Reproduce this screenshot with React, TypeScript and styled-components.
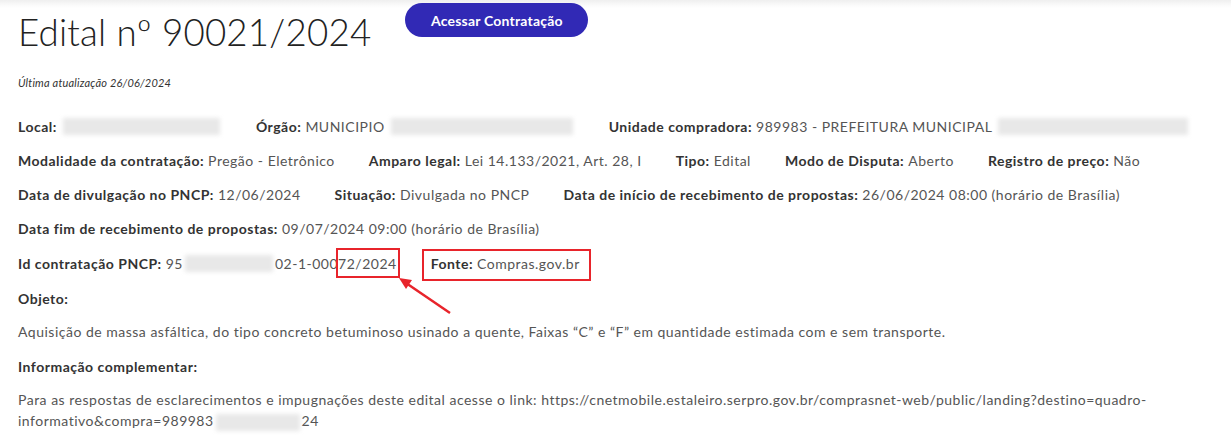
import styled, { createGlobalStyle } from 'styled-components';

const Global = createGlobalStyle`
  html, body {
    margin: 0;
    padding: 0;
    background: #ffffff;
  }
  body {
    font-family: Lato, "Open Sans", sans-serif;
    color: #333;
  }
`;

const Page = styled.div`
  width: 1231px;
  height: 442px;
  overflow: hidden;
  position: relative;
  background: linear-gradient(#efefef 0, #fafafa 5px, #fff 8px);
`;

const Header = styled.div`
  display: flex;
  align-items: flex-start;
  gap: 34px;
  padding: 3px 0 0 18px;
`;

const Title = styled.h1`
  margin: 9px 0 0;
  font-weight: 300;
  font-size: 36.7px;
  letter-spacing: 0.2px;
  color: #222;
  line-height: 40px;
`;

const ActionButton = styled.button`
  width: 183px;
  height: 34px;
  border: none;
  border-radius: 17px;
  background: #3129b5;
  color: #fff;
  font-family: Lato, sans-serif;
  font-weight: 700;
  font-size: 14px;
  letter-spacing: 0.2px;
  cursor: pointer;
`;

const Updated = styled.div`
  margin: 24px 0 0 18px;
  font-size: 11px;
  font-style: italic;
  letter-spacing: 0.2px;
  color: #333;
`;

const Details = styled.div`
  display: flex;
  flex-direction: column;
  padding: 21px 0 0 18px;
  letter-spacing: 0.5px;
`;

const Row = styled.div<{ $h?: number }>`
  display: flex;
  align-items: center;
  gap: 34px;
  height: ${(p) => p.$h ?? 34}px;
  font-size: 14px;
`;

const Item = styled.span`
  white-space: nowrap;
  color: #555;
  display: inline-flex;
  align-items: center;
  position: relative;
`;

const Label = styled.b`
  color: #333;
  font-weight: 700;
  margin-right: 4px;
`;

const Blur = styled.span<{ $w: number }>`
  display: inline-block;
  vertical-align: middle;
  width: ${(p) => p.$w}px;
  height: 17px;
  margin: 0 2px;
  background: #e8e8e8;
  filter: blur(2px);
`;

const Mark = styled.span`
  position: relative;
  &::after {
    content: '';
    position: absolute;
    left: -2px;
    right: -3px;
    top: -7px;
    bottom: -6px;
    border: 2px solid #e8242b;
  }
`;

const Boxed = styled(Item)`
  &::after {
    content: '';
    position: absolute;
    left: -9px;
    right: -11px;
    top: -6px;
    bottom: -9px;
    border: 2px solid #e8242b;
  }
`;

const Para = styled.p`
  margin: 0;
  font-size: 14px;
  color: #555;
  line-height: 21px;
  padding: 6px 0 7px;
  max-width: 1195px;
`;

const Arrow = styled.svg`
  position: absolute;
  left: 392px;
  top: 273px;
`;

export default function App() {
  return (
    <Page>
      <Global />
      <Header>
        <Title>Edital nº 90021/2024</Title>
        <ActionButton>Acessar Contratação</ActionButton>
      </Header>
      <Updated>Última atualização 26/06/2024</Updated>
      <Details>
        <Row $h={33}>
          <Item><Label>Local:</Label><Blur $w={157} /></Item>
          <Item><Label>Órgão:</Label>MUNICIPIO&nbsp;<Blur $w={182} /></Item>
          <Item><Label>Unidade compradora:</Label>989983 - PREFEITURA MUNICIPAL&nbsp;<Blur $w={190} /></Item>
        </Row>
        <Row>
          <Item><Label>Modalidade da contratação:</Label>Pregão - Eletrônico</Item>
          <Item><Label>Amparo legal:</Label>Lei 14.133/2021, Art. 28, I</Item>
          <Item><Label>Tipo:</Label>Edital</Item>
          <Item><Label>Modo de Disputa:</Label>Aberto</Item>
          <Item><Label>Registro de preço:</Label>Não</Item>
        </Row>
        <Row>
          <Item><Label>Data de divulgação no PNCP:</Label>12/06/2024</Item>
          <Item><Label>Situação:</Label>Divulgada no PNCP</Item>
          <Item><Label>Data de início de recebimento de propostas:</Label>26/06/2024 08:00 (horário de Brasília)</Item>
        </Row>
        <Row $h={35}>
          <Item><Label>Data fim de recebimento de propostas:</Label>09/07/2024 09:00 (horário de Brasília)</Item>
        </Row>
        <Row $h={35}>
          <Item><Label>Id contratação PNCP:</Label>95<Blur $w={88} />02-1-000<Mark>72/2024</Mark></Item>
          <Boxed><Label>Fonte:</Label>Compras.gov.br</Boxed>
        </Row>
        <Row>
          <Item><Label>Objeto:</Label></Item>
        </Row>
        <Para>Aquisição de massa asfáltica, do tipo concreto betuminoso usinado a quente, Faixas “C” e “F” em quantidade estimada com e sem transporte.</Para>
        <Row>
          <Item><Label>Informação complementar:</Label></Item>
        </Row>
        <Para>
          Para as respostas de esclarecimentos e impugnações deste edital acesse o link: https://cnetmobile.estaleiro.serpro.gov.br/comprasnet-web/public/landing?destino=quadro-
          <br />
          informativo&amp;compra=989983<Blur $w={84} />24
        </Para>
      </Details>
      <Arrow width="70" height="50" viewBox="0 0 70 50">
        <line x1="58" y1="40" x2="14" y2="10" stroke="#e8242b" strokeWidth="2.5" />
        <polygon points="7,5 20,7 14,16" fill="#e8242b" />
      </Arrow>
    </Page>
  );
}
